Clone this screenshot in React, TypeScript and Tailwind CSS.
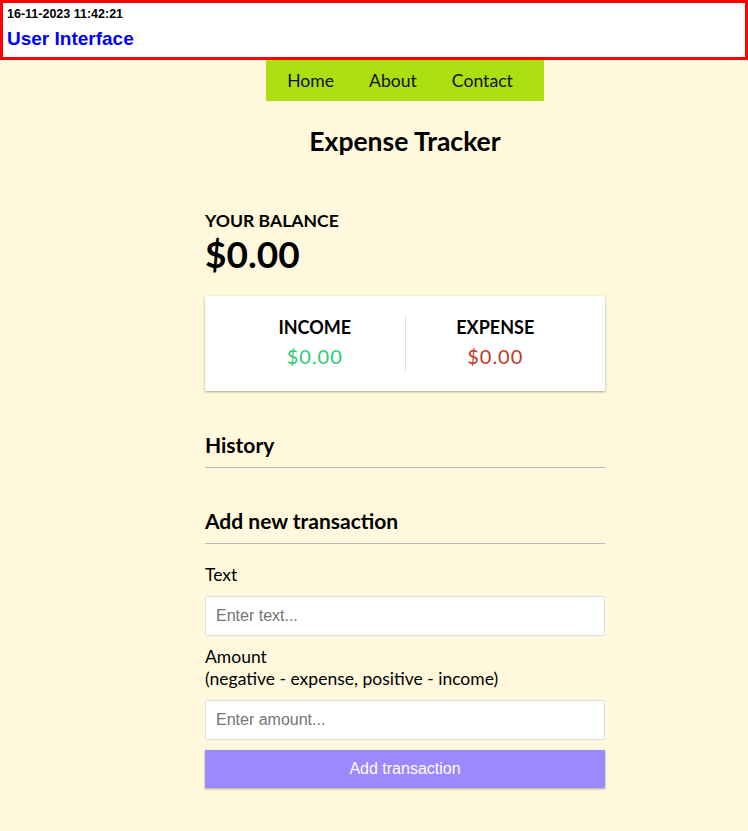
export default function App() {
  const lato = "font-['Lato',sans-serif]";
  return (
    <div className="min-h-[831px] bg-[#fff8dc] pb-[30px]">
      <header className="border-[3px] border-[#ff0000] bg-white px-[4px] pt-[4px] h-[60px] font-['Liberation_Sans',Arial,sans-serif]">
        <div className="text-[12.5px] font-bold leading-[14px] text-black">16-11-2023 11:42:21</div>
        <div className="mt-[6px] text-[19px] font-bold leading-[24px] text-[#0000ff]">User Interface</div>
      </header>
      <div className="pl-[62px]">
        <div className="flex justify-center">
          <nav className={`flex h-[41px] items-center gap-[35px] bg-[#acdf12] pl-[21px] pr-[31px] pt-[2px] text-[17.6px] text-[#111] ${lato}`}>
            <span>Home</span>
            <span>About</span>
            <span>Contact</span>
          </nav>
        </div>
        <h2 className={`mt-[22px] text-center text-[26.5px] font-bold leading-[36px] text-black ${lato}`}>Expense Tracker</h2>
        <div className={`mx-auto w-[400px] text-black ${lato}`}>
          <h4 className="mt-[51px] text-[17.6px] font-bold uppercase leading-[22px]">Your Balance</h4>
          <div className="text-[37px] font-bold leading-[44px]">$0.00</div>
          <div className="mt-[20px] flex bg-white p-[20px] shadow-[0_1px_3px_rgba(0,0,0,0.12),0_1px_2px_rgba(0,0,0,0.24)]">
            <div className="flex-1 border-r border-[#dedede] text-center">
              <h4 className="text-[18px] font-bold uppercase leading-[22px]">Income</h4>
              <p className="mt-[4px] text-[20px] leading-[29px] tracking-[1px] text-[#2ecc71]">$0.00</p>
            </div>
            <div className="flex-1 text-center">
              <h4 className="text-[18px] font-bold uppercase leading-[22px]">Expense</h4>
              <p className="mt-[4px] text-[20px] leading-[29px] tracking-[1px] text-[#c0392b]">$0.00</p>
            </div>
          </div>
          <h3 className="mt-[41px] border-b border-[#bbb] pb-[9px] text-[21px] font-bold leading-[26px]">History</h3>
          <h3 className="mt-[40px] border-b border-[#bbb] pb-[9px] text-[21px] font-bold leading-[26px]">Add new transaction</h3>
          <div className="mt-[10px]">
            <label className="my-[10px] inline-block text-[17.5px] leading-[22px]">Text</label>
            <input
              type="text"
              placeholder="Enter text..."
              className="block h-[40px] w-full rounded-[2px] border border-[#dedede] bg-white px-[10px] font-['Liberation_Sans',Arial,sans-serif] text-[16px] outline-none placeholder:text-[#757575]"
            />
          </div>
          <div>
            <label className="my-[10px] inline-block text-[17.5px] leading-[22px]">
              Amount <br />
              (negative - expense, positive - income)
            </label>
            <input
              type="number"
              placeholder="Enter amount..."
              className="block h-[40px] w-full rounded-[2px] border border-[#dedede] bg-white px-[10px] font-['Liberation_Sans',Arial,sans-serif] text-[16px] outline-none placeholder:text-[#757575]"
            />
          </div>
          <button className="mt-[10px] block h-[38px] w-full bg-[#9c88ff] font-['Liberation_Sans',Arial,sans-serif] text-[16px] text-white shadow-[0_1px_3px_rgba(0,0,0,0.12),0_1px_2px_rgba(0,0,0,0.24)]">
            Add transaction
          </button>
        </div>
      </div>
    </div>
  );
}
